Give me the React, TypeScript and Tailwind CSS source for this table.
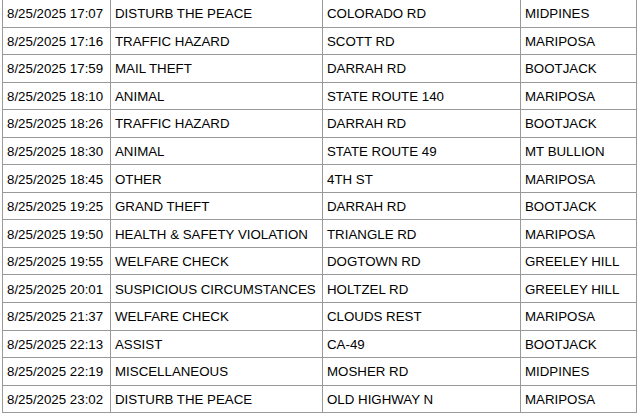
const rows = [
  ["8/25/2025 17:07", "DISTURB THE PEACE", "COLORADO RD", "MIDPINES"],
  ["8/25/2025 17:16", "TRAFFIC HAZARD", "SCOTT RD", "MARIPOSA"],
  ["8/25/2025 17:59", "MAIL THEFT", "DARRAH RD", "BOOTJACK"],
  ["8/25/2025 18:10", "ANIMAL", "STATE ROUTE 140", "MARIPOSA"],
  ["8/25/2025 18:26", "TRAFFIC HAZARD", "DARRAH RD", "BOOTJACK"],
  ["8/25/2025 18:30", "ANIMAL", "STATE ROUTE 49", "MT BULLION"],
  ["8/25/2025 18:45", "OTHER", "4TH ST", "MARIPOSA"],
  ["8/25/2025 19:25", "GRAND THEFT", "DARRAH RD", "BOOTJACK"],
  ["8/25/2025 19:50", "HEALTH & SAFETY VIOLATION", "TRIANGLE RD", "MARIPOSA"],
  ["8/25/2025 19:55", "WELFARE CHECK", "DOGTOWN RD", "GREELEY HILL"],
  ["8/25/2025 20:01", "SUSPICIOUS CIRCUMSTANCES", "HOLTZEL RD", "GREELEY HILL"],
  ["8/25/2025 21:37", "WELFARE CHECK", "CLOUDS REST", "MARIPOSA"],
  ["8/25/2025 22:13", "ASSIST", "CA-49", "BOOTJACK"],
  ["8/25/2025 22:19", "MISCELLANEOUS", "MOSHER RD", "MIDPINES"],
  ["8/25/2025 23:02", "DISTURB THE PEACE", "OLD HIGHWAY N", "MARIPOSA"],
];

export default function App() {
  return (
    <div
      className="w-[640px] h-[418px] bg-white overflow-hidden text-[13.3px] text-black"
      style={{ fontFamily: '"Liberation Sans", Arial, sans-serif' }}
    >
      <div className="ml-[2px] mt-[-1px] w-[635px] border-l border-r border-t border-[#9a9a9a]">
        {rows.map((row, i) => (
          <div
            key={i}
            className="grid grid-cols-[108px_212px_198px_115px] h-[27.55px] border-b border-[#9a9a9a]"
          >
            {row.map((cell, j) => (
              <div
                key={j}
                className={`flex items-center pl-[4px] pt-[2px] whitespace-nowrap overflow-hidden ${
                  j < 3 ? "border-r border-[#9a9a9a]" : ""
                }`}
              >
                {cell}
              </div>
            ))}
          </div>
        ))}
      </div>
    </div>
  );
}
